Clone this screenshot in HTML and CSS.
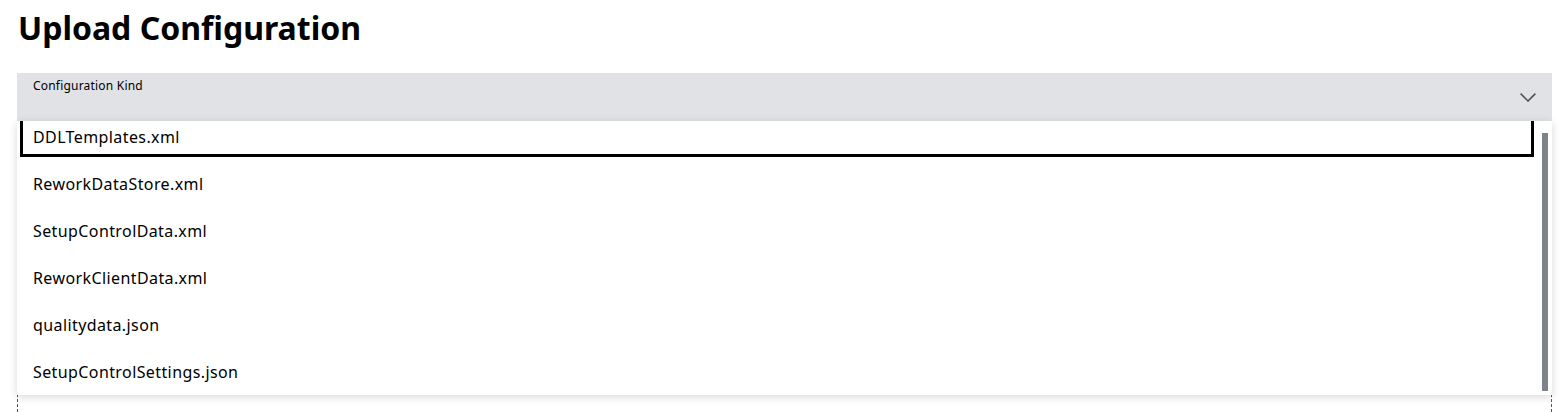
FILE: index.html
```html
<!DOCTYPE html>
<html lang="en">
<head>
<meta charset="utf-8">
<title>Upload Configuration</title>
<link rel="stylesheet" href="styles.css">
</head>
<body>
<main class="page">
  <h1 class="title">Upload Configuration</h1>
  <div class="field">
    <div class="select">
      <span class="select-label">Configuration Kind</span>
      <svg class="chevron" width="16" height="9" viewBox="0 0 16 9" aria-hidden="true">
        <path d="M0.6 0.6 L8 8 L15.4 0.6" fill="none" stroke="#4a4d51" stroke-width="1.5"/>
      </svg>
    </div>
    <div class="dropzone"></div>
    <div class="listbox" role="listbox">
      <ul class="options">
        <li class="option first focused">DDLTemplates.xml</li>
        <li class="option">ReworkDataStore.xml</li>
        <li class="option">SetupControlData.xml</li>
        <li class="option">ReworkClientData.xml</li>
        <li class="option">qualitydata.json</li>
        <li class="option">SetupControlSettings.json</li>
      </ul>
      <div class="scroll-track"><div class="scroll-thumb"></div></div>
    </div>
  </div>
</main>
</body>
</html>
```
FILE: styles.css
```css
* { box-sizing: border-box; }
html, body { margin: 0; background: #fff; }
body {
  font-family: "Noto Sans", "Open Sans", sans-serif;
  color: #000;
  height: 412px;
  overflow: hidden;
}
.page {
  width: 1552px;
  padding: 0 0 0 17px;
}
.title {
  margin: 0;
  padding: 7px 0 0 1px;
  height: 73px;
  font-size: 32px;
  font-weight: 700;
  line-height: 42px;
}
.field {
  position: relative;
}
.select {
  position: relative;
  height: 48px;
  background: #e0e2e5;
  padding: 5px 16px 0;
}
.select-label {
  display: block;
  font-size: 12px;
  letter-spacing: 0.2px;
  line-height: 16px;
  color: #000;
}
.chevron {
  position: absolute;
  right: 16px;
  top: 20px;
}
.dropzone {
  height: 291px;
  border-left: 1px dashed #555;
  border-right: 1px dashed #555;
}
.listbox {
  position: absolute;
  top: 48px;
  left: 0;
  right: 0;
  height: 274px;
  background: #fff;
  box-shadow: 0 2px 8px rgba(0,0,0,0.16);
  display: flex;
  overflow: hidden;
}
.options {
  list-style: none;
  margin: 0;
  padding: 0;
  flex: 1;
}
.option {
  height: 47px;
  display: flex;
  align-items: center;
  padding-left: 16px;
  font-size: 16px;
  letter-spacing: 0.4px;
}
.option.first { margin-top: -8px; }
.option.focused {
  outline: 3px solid #000;
  outline-offset: -6px;
}
.scroll-track {
  width: 15px;
  padding: 12px 0 4px;
  display: flex;
  justify-content: center;
}
.scroll-thumb {
  width: 6px;
  background: #7d8389;
}
```
